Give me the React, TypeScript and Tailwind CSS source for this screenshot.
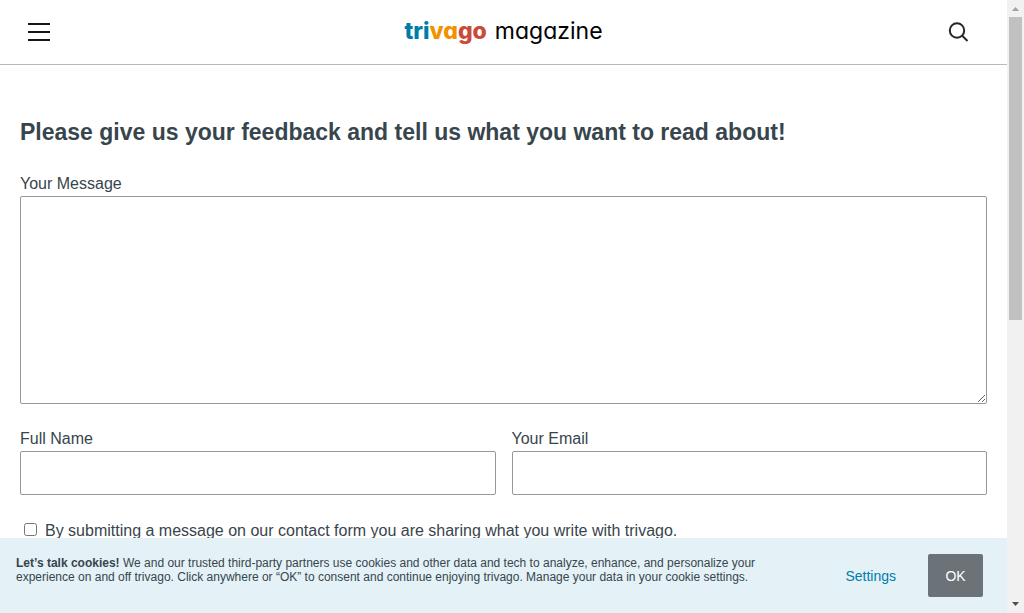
import React from 'react';

function Logo() {
  return (
    <a
      href="#home"
      className="flex items-baseline gap-2 pb-0.5 font-['Inter',sans-serif] leading-8 whitespace-nowrap [font-feature-settings:'cv11']"
    >
      <span className="text-[23px] font-extrabold">
        <span className="text-[#007cab]">tri</span>
        <span className="text-[#f39200]">va</span>
        <span className="text-[#c94a38]">go</span>
      </span>
      <span className="text-[23px] text-black">magazine</span>
    </a>
  );
}

function Header() {
  return (
    <header className="flex h-[65px] shrink-0 items-center justify-between border-b border-[#bababa] pr-8 pl-7">
      <button type="button" aria-label="Open menu" className="flex h-8 w-9 items-center">
        <svg width="22" height="18" viewBox="0 0 22 18" fill="#171717" aria-hidden="true">
          <path d="M0 0h22v2H0zM0 8h22v2H0zM0 16h22v2H0z" />
        </svg>
      </button>
      <Logo />
      <button type="button" aria-label="Search" className="flex h-8 w-8 items-center justify-center">
        <svg width="24" height="24" viewBox="0 0 24 24" fill="none" stroke="#262626" strokeWidth="2" aria-hidden="true">
          <circle cx="10" cy="10.5" r="7.200" />
          <path d="M15 15.500l5.500 5.500" />
        </svg>
      </button>
    </header>
  );
}

const fieldClass =
  'block w-full rounded-xs border border-[#92999e] bg-white px-3 text-base outline-none';

function FeedbackForm() {
  return (
    <form className="flex flex-col gap-[23px] px-5 pt-[50px]">
      <h1 className="text-[23px] leading-[34px] font-bold">
        Please give us your feedback and tell us what you want to read about!
      </h1>
      <div>
        <label htmlFor="message" className="block">Your Message</label>
        <textarea id="message" className={`${fieldClass} h-52 resize`} />
      </div>
      <div className="grid grid-cols-2 gap-4">
        <div>
          <label htmlFor="name" className="block">Full Name</label>
          <input id="name" type="text" className={`${fieldClass} h-11`} />
        </div>
        <div>
          <label htmlFor="email" className="block">Your Email</label>
          <input id="email" type="email" className={`${fieldClass} h-11`} />
        </div>
      </div>
      <div className="flex items-start gap-2 pl-1">
        <input id="consent" type="checkbox" className="mt-[5px] h-[13px] w-[13px]" />
        <label htmlFor="consent" className="leading-[26px]">
          By submitting a message on our contact form you are sharing what you write with trivago.
        </label>
      </div>
    </form>
  );
}

function CookieBar() {
  return (
    <footer className="flex shrink-0 items-center bg-[#e4f1f6] py-4 pr-6 pl-4">
      <p className="max-w-[760px] flex-1 self-start pt-0.5 text-xs leading-[14px]">
        <b>Let’s talk cookies!</b> We and our trusted third-party partners use cookies and other data
        and tech to analyze, enhance, and personalize your experience on and off trivago. Click
        anywhere or “OK” to consent and continue enjoying trivago. Manage your data in your cookie
        settings.
      </p>
      <div className="ml-auto flex items-center gap-8">
        <button type="button" className="text-sm text-[#007cab]">Settings</button>
        <button type="button" className="h-[43px] w-[55px] rounded-xs bg-[#6c7378] text-sm text-white">
          OK
        </button>
      </div>
    </footer>
  );
}

function ScrollRail() {
  return (
    <div aria-hidden="true" className="flex w-[17px] shrink-0 flex-col items-center bg-[#f1f1f1]">
      <svg width="17" height="17" viewBox="0 0 17 17" fill="#a3a3a3" className="shrink-0">
        <path d="M5 11h7L8.5 7z" />
      </svg>
      <div className="flex w-full flex-1 flex-col items-center">
        <div className="h-[52.3%] w-[13px] bg-[#c1c1c1]" />
      </div>
      <svg width="17" height="17" viewBox="0 0 17 17" fill="#505050" className="shrink-0">
        <path d="M5 6h7l-3.500 4z" />
      </svg>
    </div>
  );
}

export default function App() {
  return (
    <div className="flex h-screen overflow-hidden bg-white font-['Liberation_Sans',Arial,sans-serif] text-base leading-6 text-[#37454d]">
      <div className="flex min-w-0 flex-1 flex-col">
        <Header />
        <main className="min-h-0 flex-1 overflow-hidden">
          <FeedbackForm />
        </main>
        <CookieBar />
      </div>
      <ScrollRail />
    </div>
  );
}
